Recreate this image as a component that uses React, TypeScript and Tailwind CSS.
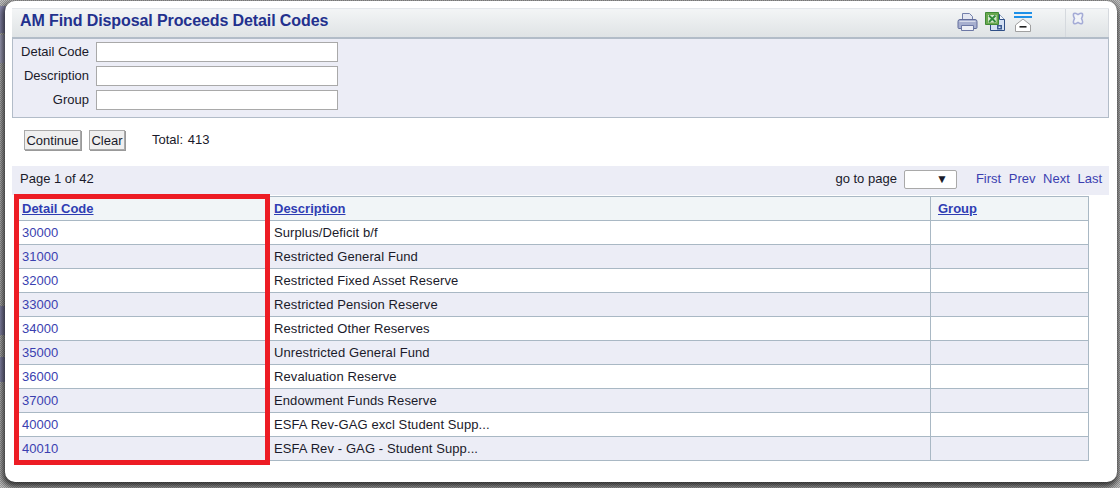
const rows = [
  ["30000", "Surplus/Deficit b/f"],
  ["31000", "Restricted General Fund"],
  ["32000", "Restricted Fixed Asset Reserve"],
  ["33000", "Restricted Pension Reserve"],
  ["34000", "Restricted Other Reserves"],
  ["35000", "Unrestricted General Fund"],
  ["36000", "Revaluation Reserve"],
  ["37000", "Endowment Funds Reserve"],
  ["40000", "ESFA Rev-GAG excl Student Supp..."],
  ["40010", "ESFA Rev - GAG - Student Supp..."],
];

function PrinterIcon() {
  return (
    <svg width="21" height="20" viewBox="0 0 21 20">
      <path d="M5.500 1.500h7l3 3v5h-10z" fill="#e4e7f1" stroke="#7480ab" />
      <path d="M3 7.500h15a2 2 0 0 1 2 2v6a1 1 0 0 1-1 1H2a1 1 0 0 1-1-1v-6a2 2 0 0 1 2-2z" fill="#a7afcf" stroke="#626d9b" />
      <path d="M2.500 9.500h16" stroke="#d7dbea" />
      <path d="M4.500 13.500h12v5h-12z" fill="#edeff6" stroke="#6d78a5" />
    </svg>
  );
}

function ExcelIcon() {
  return (
    <svg width="21" height="20" viewBox="0 0 21 20">
      <path d="M5.500 2.500h9l5 5v11h-14z" fill="#d3e0f3" stroke="#2f4f86" />
      <path d="M14.500 2.500v5h5" fill="#f2f6fc" stroke="#2f4f86" />
      <path d="M.5.500h13v12H.5z" fill="#6aa84f" stroke="#3f8a36" />
      <path d="M3 3h8.500v7.500H3z" fill="#d8ead0" />
      <path d="M4 3.500l6.500 6.500M10.500 3.500L4 10" stroke="#2f8a3a" strokeWidth="1.8" />
      <path d="M12 13h5v4.500h-5z" fill="#3d5c92" />
      <path d="M13.500 14.500h2v1.500h-2z" fill="#dfe8f6" />
    </svg>
  );
}

function CollapseIcon() {
  return (
    <svg width="18" height="20" viewBox="0 0 18 20">
      <path d="M0 0h18v2H0z" fill="#1e90e8" />
      <path d="M0 4h18v2H0z" fill="#1e90e8" />
      <path d="M9 7L1.500 13v6.500h15V13z" fill="#fff" stroke="#a0a0a0" />
      <path d="M5.500 14h7v1.600h-7z" fill="#222" />
    </svg>
  );
}

function CloseIcon() {
  return (
    <svg width="14" height="13" viewBox="0 0 14 13">
      <path
        d="M3 1.500c1.500-1 3 .5 4 1 1-.5 2.500-2 4-1 1.500 1 .5 3-.5 5 1 2 2 4 .5 5-1.500 1-3-.5-4-1-1 .5-2.500 2-4 1-1.500-1-.5-3 .5-5-1-2-2-4-.5-5z"
        fill="#f2f4f8"
        stroke="#a4abd6"
        strokeWidth="1.600"
      />
    </svg>
  );
}

function Field({ label }: { label: string }) {
  return (
    <div className="flex items-center h-6">
      <label className="w-[76px] text-right">{label}</label>
      <input className="ml-[7px] w-[242px] h-5 bg-white border border-[#a9a9a9] outline-none" />
    </div>
  );
}

export default function App() {
  return (
    <div className="relative w-[1120px] h-[488px] overflow-hidden bg-[repeating-conic-gradient(#999999_0_25%,#c4c4c4_0_50%)] bg-[length:2px_2px] font-['Liberation_Sans',Arial,sans-serif] text-[13px] text-[#1a1a2a]">
      {/* bits of the page behind the dialog */}
      <div className="absolute left-0 top-[6px] w-[6px] h-[27px] bg-[#8c8cb0]" />
      <div className="absolute left-0 top-[35px] w-[6px] h-[28px] bg-[#a9a9c4]" />
      <div className="absolute left-0 top-[306px] w-[6px] h-[29px] bg-[#8c8cb0]" />
      <div className="absolute left-0 top-[357px] w-[6px] h-[25px] bg-[#8c8cb0]" />

      <div className="relative ml-[5px] mt-[1px] w-[1112px] h-[481px] bg-white rounded-[10px] shadow-[-1px_3px_6px_2px_rgba(0,0,0,0.7)] pt-[7px] px-[7px]">
        <div className="w-[1097px] h-[31px] flex items-center justify-between border-t border-[#e3e6ea] border-b-2 border-b-[#b2bcc8] bg-gradient-to-b from-[#f3f5f6] to-[#dfe3e5]">
          <h1 className="pl-[8px] pb-[5px] text-[16px] tracking-[-0.1px] font-bold text-[#23318e]">
            AM Find Disposal Proceeds Detail Codes
          </h1>
          <div className="flex h-full">
            <div className="flex pt-[3px] pr-[33px]">
              <PrinterIcon />
              <div className="ml-[7px]">
                <ExcelIcon />
              </div>
              <div className="ml-[8px]">
                <CollapseIcon />
              </div>
            </div>
            <div className="w-[44px] h-full border-l border-[#d5d9de] border-r pl-[5px] pt-[3px]">
              <CloseIcon />
            </div>
          </div>
        </div>

        <div className="w-[1097px] h-[79px] bg-[#ecedf6] border border-t-0 border-[#b2bcc8] pt-[1px]">
          <Field label="Detail Code" />
          <Field label="Description" />
          <Field label="Group" />
        </div>

        <div className="flex items-start h-[48px] pl-[12px] pt-[12px]">
          <button className="h-5 w-[57px] bg-[#efefef] border border-[#a9a9a9] shadow-[1px_1px_0_#999] pb-[1px]">Continue</button>
          <button className="ml-[8px] h-5 w-[36px] bg-[#efefef] border border-[#a9a9a9] shadow-[1px_1px_0_#999] pb-[1px]">Clear</button>
          <span className="ml-[27px] leading-5">
            Total: <span className="ml-[1px]">413</span>
          </span>
        </div>

        <div className="w-[1097px] h-[29px] flex items-center justify-between bg-[#ecedf6] pl-[8px] pr-[7px]">
          <span className="pb-[3px]">Page 1 of 42</span>
          <div className="flex items-center pb-[3px]">
            <span>go to page</span>
            <div className="ml-[7px] w-[53px] h-[19px] bg-white border border-[#a9a9a9] rounded-[2px] flex items-center justify-end pr-[8px] text-[12px]">▼</div>
            <div className="ml-[19px] flex gap-[7.6px] text-[#3b3fb0]">
              <a>First</a>
              <a>Prev</a>
              <a>Next</a>
              <a>Last</a>
            </div>
          </div>
        </div>

        <table className="ml-[3px] mt-[1px] w-[1074px] table-fixed border-collapse">
          <thead>
            <tr className="h-6 bg-[#f1f5f7]">
              <th className="w-[252px] border border-[#a9b8c4] pl-[6px] text-left font-bold text-[#2f3db3] underline">Detail Code</th>
              <th className="w-[663px] border border-[#a9b8c4] pl-[6px] text-left font-bold text-[#2f3db3] underline">Description</th>
              <th className="border border-[#a9b8c4] pl-[7px] text-left font-bold text-[#2f3db3] underline">Group</th>
            </tr>
          </thead>
          <tbody>
            {rows.map(([code, desc], i) => (
              <tr key={code} className={i % 2 === 0 ? "h-6 bg-white" : "h-6 bg-[#ecedf6]"}>
                <td className="border border-[#a9b8c4] pl-[6px] text-[#3b3fb0]">{code}</td>
                <td className="border border-[#a9b8c4] pl-[6px] tracking-[0.1px]">{desc}</td>
                <td className="border border-[#a9b8c4]"></td>
              </tr>
            ))}
          </tbody>
        </table>
      </div>

      {/* annotation drawn over the screenshot */}
      <div className="absolute left-[14px] top-[194px] w-[256px] h-[271px] border-[5px] border-[#ed1c24]" />
    </div>
  );
}
